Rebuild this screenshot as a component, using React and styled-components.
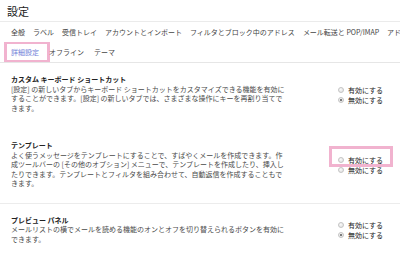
import React from "react";
import styled, { createGlobalStyle } from "styled-components";

const GlobalStyle = createGlobalStyle`
  html, body {
    margin: 0;
    padding: 0;
    background: #fff;
  }
  body {
    font-family: "Noto Sans CJK JP", "Noto Sans", sans-serif;
    color: #222;
    overflow: hidden;
  }
`;

const Page = styled.div`
  width: 400px;
  height: 254px;
  overflow: hidden;
`;

const Header = styled.div`
  height: 21px;
  display: flex;
  align-items: center;
  padding-left: 7px;
  font-size: 11px;
  color: #222;
  border-bottom: 1px solid #ebebeb;
`;

const TabBar = styled.div`
  border-bottom: 1px solid #e6e6e6;
`;

const TabRow = styled.div`
  height: 20px;
  display: flex;
  align-items: center;
  gap: ${props => props.gap}px;
  padding-left: 11px;
  white-space: nowrap;
  overflow: hidden;
`;

const Tab = styled.span`
  position: relative;
  font-size: 7px;
  line-height: 20px;
  color: ${props => (props.active ? "#6f7fd8" : "#444")};
  flex-shrink: 0;

  ${props =>
    props.highlight &&
    `
    &::after {
      content: "";
      position: absolute;
      left: -7px;
      right: -11px;
      top: -1px;
      bottom: -1px;
      border: 3px solid #f1b3cf;
    }
  `}
`;

const Section = styled.div`
  display: grid;
  grid-template-columns: 1fr 62px;
  align-items: center;
  padding: 12px 0 ${props => props.bottom}px 11px;
  border-bottom: 1px solid ${props => (props.divider ? "#ececec" : "transparent")};
`;

const TextBlock = styled.div`
  font-size: 7px;
  line-height: 9.5px;
`;

const Title = styled.div`
  font-weight: bold;
  color: #222;
`;

const Line = styled.div`
  color: #4a4a4a;
  white-space: nowrap;
`;

const Options = styled.div`
  display: flex;
  flex-direction: column;
  padding-top: 1px;
`;

const Option = styled.label`
  position: relative;
  display: flex;
  align-items: center;
  gap: 4px;
  height: 10px;
  font-size: 7px;
  color: #222;

  ${props =>
    props.highlight &&
    `
    &::after {
      content: "";
      position: absolute;
      left: -9px;
      right: 7px;
      top: -9px;
      bottom: -2px;
      border: 3px solid #f1b3cf;
    }
  `}
`;

const Circle = styled.span`
  width: 6px;
  height: 6px;
  box-sizing: border-box;
  border-radius: 50%;
  border: 1px solid #c4c4c4;
  background: radial-gradient(circle at 40% 35%, #fafafa, #dcdcdc);
  display: flex;
  align-items: center;
  justify-content: center;

  &::before {
    content: "";
    width: 2px;
    height: 2px;
    border-radius: 50%;
    background: ${props => (props.checked ? "#555" : "transparent")};
  }
`;

const row1 = [
  "全般",
  "ラベル",
  "受信トレイ",
  "アカウントとインポート",
  "フィルタとブロック中のアドレス",
  "メール転送と POP/IMAP",
  "アドオン",
];

const sections = [
  {
    title: "カスタム キーボード ショートカット",
    lines: [
      "[設定] の新しいタブからキーボード ショートカットをカスタマイズできる機能を有効に",
      "することができます。[設定] の新しいタブでは、さまざまな操作にキーを再割り当てで",
      "きます。",
    ],
    checked: 1,
    bottom: 15,
  },
  {
    title: "テンプレート",
    lines: [
      "よく使うメッセージをテンプレートにすることで、すばやくメールを作成できます。作",
      "成ツールバーの [その他のオプション] メニューで、テンプレートを作成したり、挿入し",
      "たりできます。テンプレートとフィルタを組み合わせて、自動返信を作成することもで",
      "きます。",
    ],
    checked: -1,
    highlight: true,
    bottom: 14,
    divider: true,
  },
  {
    title: "プレビュー パネル",
    lines: [
      "メールリストの横でメールを読める機能のオンとオフを切り替えられるボタンを有効に",
      "できます。",
    ],
    checked: 1,
    bottom: 15,
  },
];

const labels = ["有効にする", "無効にする"];

export default function App() {
  return (
    <Page>
      <GlobalStyle />
      <Header>設定</Header>
      <TabBar>
        <TabRow gap={8}>
          {row1.map(t => (
            <Tab key={t}>{t}</Tab>
          ))}
        </TabRow>
        <TabRow gap={10}>
          <Tab active highlight>
            詳細設定
          </Tab>
          <Tab>オフライン</Tab>
          <Tab>テーマ</Tab>
        </TabRow>
      </TabBar>
      {sections.map(s => (
        <Section key={s.title} bottom={s.bottom} divider={s.divider}>
          <TextBlock>
            <Title>{s.title}</Title>
            {s.lines.map((l, i) => (
              <Line key={i}>{l}</Line>
            ))}
          </TextBlock>
          <Options>
            {labels.map((lab, i) => (
              <Option key={lab} highlight={s.highlight && i === 0}>
                <Circle checked={s.checked === i} />
                {lab}
              </Option>
            ))}
          </Options>
        </Section>
      ))}
    </Page>
  );
}
